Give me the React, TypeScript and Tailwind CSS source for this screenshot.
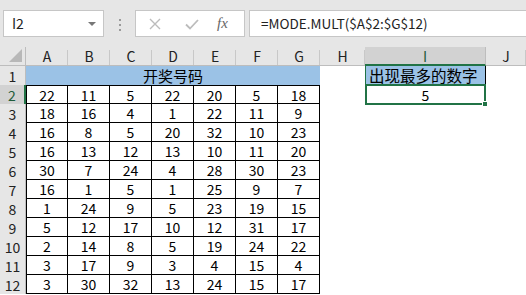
import React from 'react'

const rows: number[][] = [
  [22, 11, 5, 22, 20, 5, 18],
  [18, 16, 4, 1, 22, 11, 9],
  [16, 8, 5, 20, 32, 10, 23],
  [16, 13, 12, 13, 10, 11, 20],
  [30, 7, 24, 4, 28, 30, 23],
  [16, 1, 5, 1, 25, 9, 7],
  [1, 24, 9, 5, 23, 19, 15],
  [5, 12, 17, 10, 12, 31, 17],
  [2, 14, 8, 5, 19, 24, 22],
  [3, 17, 9, 3, 4, 15, 4],
  [3, 30, 32, 13, 24, 15, 17],
]

const cols = ['A', 'B', 'C', 'D', 'E', 'F', 'G', 'H', 'I', 'J']
const font = { fontFamily: '"Noto Sans CJK SC", "Liberation Sans", sans-serif' }

function FormulaBar() {
  return (
    <div className="flex h-[47px] items-start bg-[#e6e6e6] pt-[10px]">
      <div className="ml-[3px] flex h-[27px] w-[101px] items-center justify-between border border-[#c6c6c6] bg-white pl-[8px] pr-[7px]">
        <span className="text-[14px] text-[#222]">I2</span>
        <span className="h-0 w-0 border-x-[4px] border-t-[4px] border-x-transparent border-t-[#777]" />
      </div>
      <div className="ml-[15px] mt-[9px] flex flex-col gap-[3px]">
        <span className="h-[2px] w-[2px] bg-[#9a9a9a]" />
        <span className="h-[2px] w-[2px] bg-[#9a9a9a]" />
        <span className="h-[2px] w-[2px] bg-[#9a9a9a]" />
      </div>
      <div className="ml-[14px] flex h-[27px] w-[110px] items-center border border-[#c6c6c6] bg-white">
        <svg width="14" height="14" viewBox="0 0 14 14" className="ml-[12px]">
          <path d="M2 2 L12 12 M12 2 L2 12" stroke="#bcbcbc" strokeWidth="1.4" fill="none" />
        </svg>
        <svg width="16" height="14" viewBox="0 0 16 14" className="ml-[22px]">
          <path d="M2 7.5 L6 11.5 L14 3" stroke="#bcbcbc" strokeWidth="1.8" fill="none" />
        </svg>
        <span className="ml-[17px] font-['Liberation_Serif'] text-[15px] italic text-[#666]">fx</span>
      </div>
      <div className="ml-[4px] flex h-[27px] flex-1 items-center border border-r-0 border-[#c6c6c6] bg-white pl-[11px]">
        <span className="text-[13.5px] text-[#222]">=MODE.MULT($A$2:$G$12)</span>
      </div>
    </div>
  )
}

export default function App() {
  return (
    <div className="h-[295px] w-[526px] overflow-hidden bg-white text-[14px] text-black" style={font}>
      <FormulaBar />
      <div className="grid grid-cols-[26px_repeat(7,42px)_45px_121px_1fr] auto-rows-[19px] leading-[16px]">
        {/* column headers */}
        <div className="relative border-r border-b border-[#bdbdbd] bg-[#e6e6e6]">
          <svg width="13" height="13" viewBox="0 0 13 13" className="absolute bottom-[3px] right-[3px]">
            <polygon points="13,0 13,13 0,13" fill="#b8b8b8" />
          </svg>
        </div>
        {cols.map((c) =>
          c === 'I' ? (
            <div key={c} className="flex items-center justify-center border-r border-b-2 border-r-[#bdbdbd] border-b-[#217346] bg-[#d2d2d2] text-[#1f5c3a]">
              {c}
            </div>
          ) : (
            <div key={c} className="relative flex items-center justify-center border-b border-[#bdbdbd] bg-[#e6e6e6] text-[#222]">
              <span className="absolute right-0 top-[3px] bottom-0 w-px bg-[#c8c8c8]" />
              {c}
            </div>
          )
        )}

        {/* row 1 */}
        <div className="flex items-center justify-center border-r border-[#bdbdbd] bg-[#e6e6e6] text-[#222]">1</div>
        <div className="col-span-7 flex items-center justify-center bg-[#9bc2e6] text-[15px] leading-none">开奖号码</div>
        <div />
        <div className="flex items-center whitespace-nowrap border-l border-l-[#217346] border-r border-r-black bg-[#9bc2e6] pl-[3px] pt-px text-[15.5px] leading-none">
          出现最多的数字
        </div>
        <div />

        {/* data rows */}
        {rows.map((r, i) => {
          const n = i + 2
          const sel = n === 2
          return (
            <React.Fragment key={n}>
              <div
                className={
                  sel
                    ? 'flex items-center justify-center border-r-2 border-[#217346] bg-[#d2d2d2] text-[#1f5c3a]'
                    : 'flex items-center justify-center border-r border-[#bdbdbd] bg-[#e6e6e6] text-[#222]'
                }
              >
                {n}
              </div>
              {r.map((v, j) => (
                <div
                  key={j}
                  className={
                    'flex items-center justify-center border-r border-b border-black' +
                    (j === 0 ? ' border-l' : '') +
                    (sel ? ' border-t' : '')
                  }
                >
                  {v}
                </div>
              ))}
              <div />
              {sel ? (
                <div className="relative -mt-px flex h-[21px] items-center justify-center border-2 border-[#217346]">
                  5
                  <span className="absolute -bottom-[4px] -right-[4px] h-[6px] w-[6px] border border-white bg-[#217346]" />
                </div>
              ) : (
                <div />
              )}
              <div />
            </React.Fragment>
          )
        })}
      </div>
    </div>
  )
}
